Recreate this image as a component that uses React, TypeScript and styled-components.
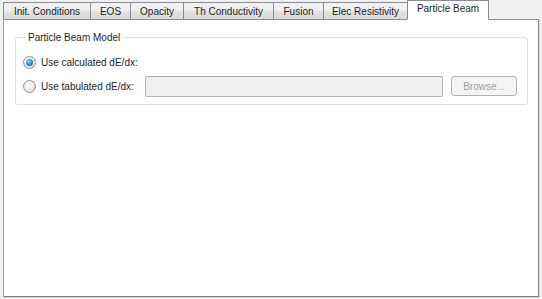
import React from 'react';
import styled, { createGlobalStyle } from 'styled-components';

const GlobalStyle = createGlobalStyle`
  html, body {
    margin: 0;
    padding: 0;
    background: #f0f0f0;
  }
  body {
    font-family: 'Liberation Sans', Arial, sans-serif;
    font-size: 10px;
    color: #000;
  }
`;

const tabs = [
  { label: 'Init. Conditions', width: 88 },
  { label: 'EOS', width: 41 },
  { label: 'Opacity', width: 54 },
  { label: 'Th Conductivity', width: 91 },
  { label: 'Fusion', width: 51 },
  { label: 'Elec Resistivity', width: 85 },
  { label: 'Particle Beam', width: 82, active: true },
];

export default function App() {
  return (
    <>
      <GlobalStyle />
      <Window>
        <TabBar>
          {tabs.map((t) => (
            <Tab key={t.label} $active={!!t.active} $width={t.width}>
              {t.label}
            </Tab>
          ))}
        </TabBar>
        <Pane>
          <Group>
            <Legend>Particle Beam Model</Legend>
            <Row>
              <Radio $checked />
              <Label>Use calculated dE/dx:</Label>
            </Row>
            <Row>
              <Radio />
              <Label>Use tabulated dE/dx:</Label>
              <PathInput disabled />
              <BrowseButton disabled>Browse...</BrowseButton>
            </Row>
          </Group>
        </Pane>
      </Window>
    </>
  );
}

const Window = styled.div`
  width: 542px;
  height: 299px;
  box-sizing: border-box;
  padding: 0 3px 2px 3px;
  display: flex;
  flex-direction: column;
`;

const TabBar = styled.div`
  display: flex;
  align-items: flex-end;
  height: 20px;
  margin-bottom: -1px;
  position: relative;
  z-index: 1;
`;

const Tab = styled.div<{ $active: boolean; $width: number }>`
  box-sizing: border-box;
  width: ${(p) => p.$width}px;
  height: ${(p) => (p.$active ? 20 : 18)}px;
  margin-left: -1px;
  &:first-child {
    margin-left: 0;
  }
  border: 1px solid #898c95;
  border-bottom: ${(p) => (p.$active ? '1px solid #fff' : '1px solid #898c95')};
  background: ${(p) =>
    p.$active ? '#fff' : 'linear-gradient(#f3f3f3 0%, #ededed 50%, #e3e3e3 51%, #d9d9d9 100%)'};
  display: flex;
  align-items: center;
  justify-content: center;
  padding-bottom: ${(p) => (p.$active ? 3 : 0)}px;
  white-space: nowrap;
  color: #1e1e1e;
`;

const Pane = styled.div`
  flex: 1;
  background: #fff;
  border: 1px solid #898c95;
  border-bottom-color: #7a7a7a;
  border-left-color: #a0a0a0;
  box-shadow: 1px 1px 0 #d8d8d8;
  padding: 12px 10px 0 11px;
`;

const Group = styled.fieldset`
  margin: 0;
  padding: 9px 0 8px 7px;
  border: 1px solid #d5dfe5;
  border-radius: 3px;
  display: flex;
  flex-direction: column;
  gap: 4px;
  min-width: 0;
`;

const Legend = styled.legend`
  padding: 0 2px;
  margin-left: 3px;
  color: #1e1e1e;
`;

const Row = styled.div`
  display: flex;
  align-items: center;
  height: 20px;
`;

const Radio = styled.span<{ $checked?: boolean }>`
  box-sizing: border-box;
  width: 13px;
  height: 13px;
  border-radius: 50%;
  border: 1px solid #8f8f8f;
  background: radial-gradient(circle at 35% 35%, #ffffff 0%, #f0f0f0 40%, #cfcfcf 100%);
  display: flex;
  align-items: center;
  justify-content: center;
  margin-right: 5px;
  flex-shrink: 0;
  &::after {
    content: '';
    display: ${(p) => (p.$checked ? 'block' : 'none')};
    width: 7px;
    height: 7px;
    border-radius: 50%;
    background: radial-gradient(circle at 40% 35%, #9bd4f4 0%, #2f8fd0 50%, #15518c 100%);
  }
`;

const Label = styled.span`
  white-space: nowrap;
  width: 104px;
  color: #1e1e1e;
`;

const PathInput = styled.input`
  box-sizing: border-box;
  width: 298px;
  height: 21px;
  margin: 0;
  background: #f0f0f0;
  border: 1px solid #b3b3b3;
  border-top-color: #a5a5a5;
  border-radius: 2px;
`;

const BrowseButton = styled.button`
  box-sizing: border-box;
  width: 66px;
  height: 20px;
  margin-left: 8px;
  padding: 0;
  font-family: inherit;
  font-size: 10px;
  color: #a0a0a0;
  background: #f4f4f4;
  border: 1px solid #adb2b5;
  border-radius: 3px;
`;
